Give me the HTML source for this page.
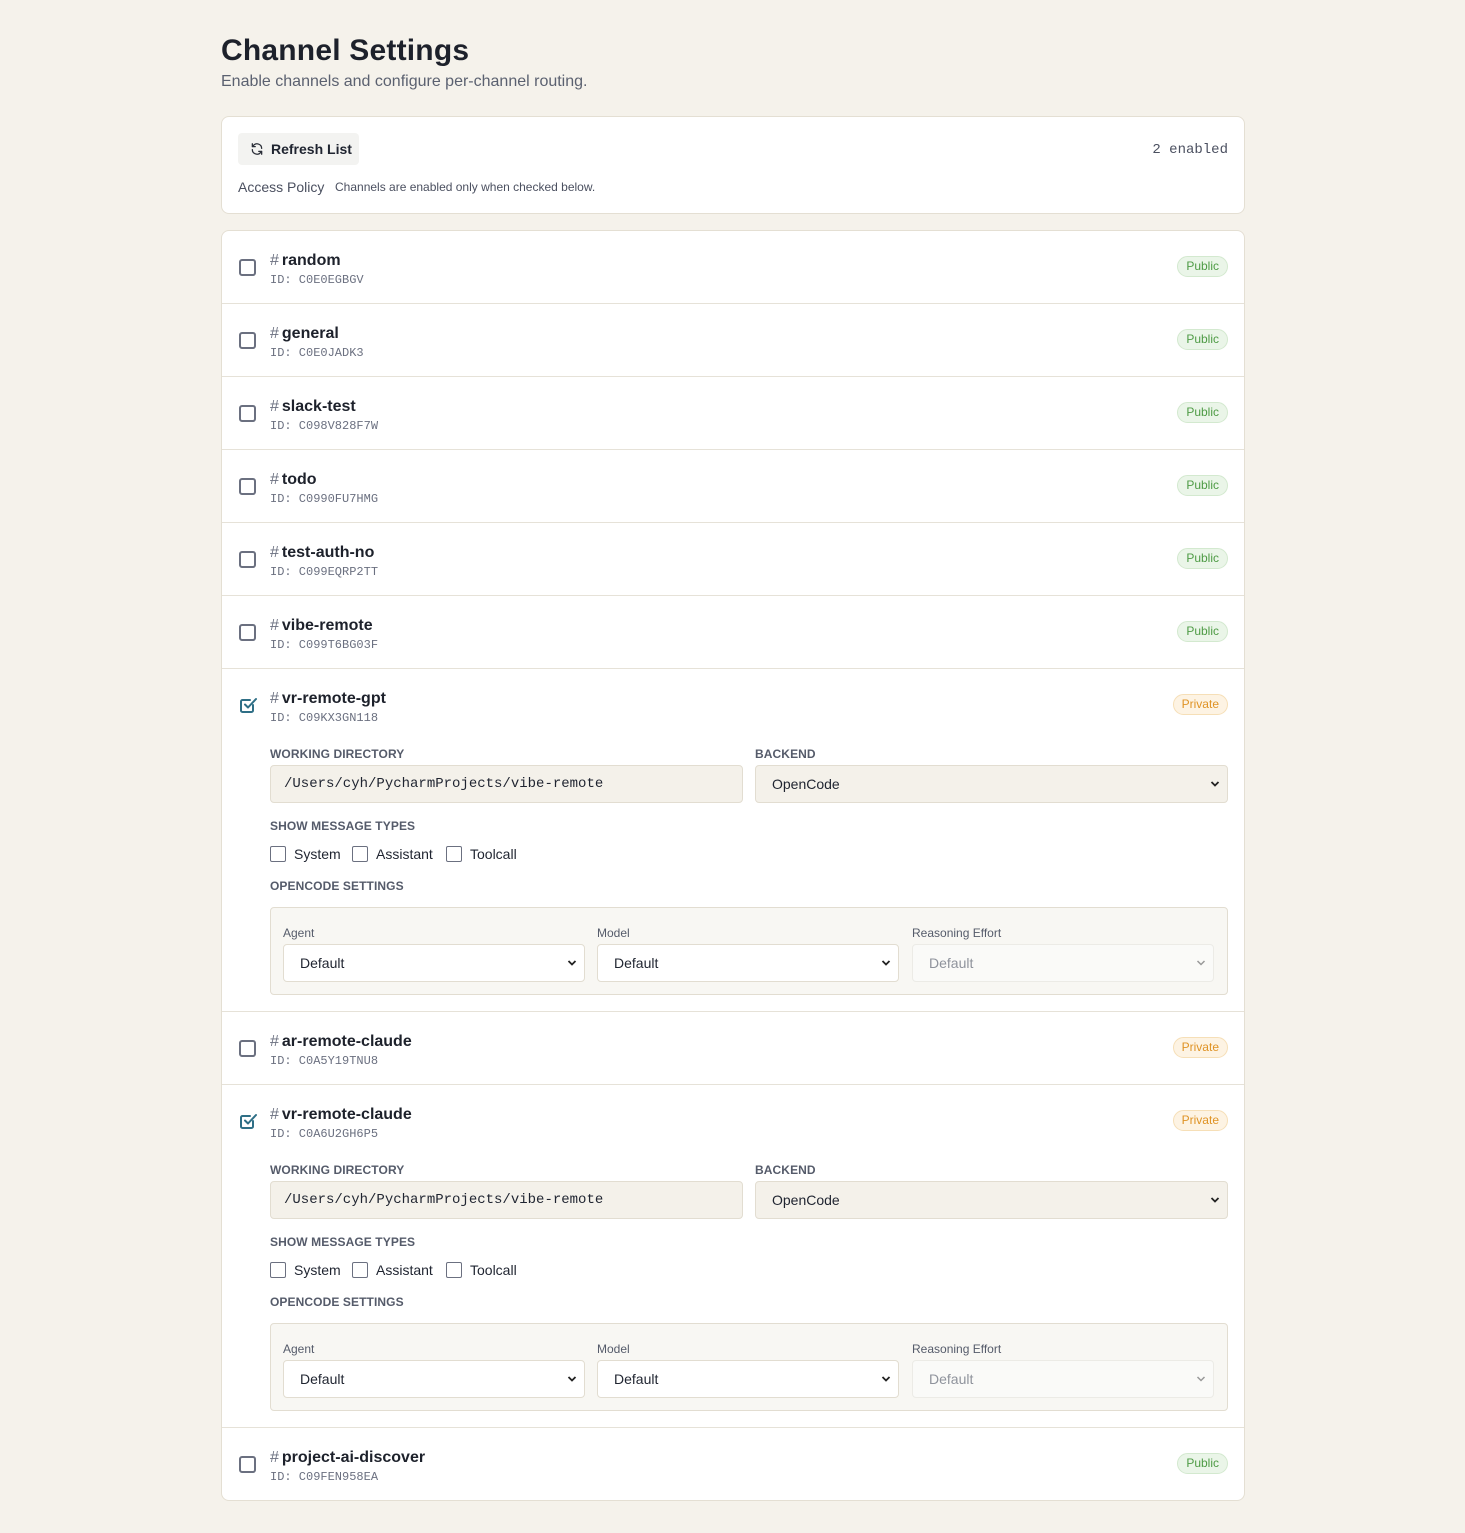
<!DOCTYPE html>
<html><head><meta charset="utf-8">
<style>
*{box-sizing:border-box;margin:0;padding:0}
body{width:1465px;height:1533px;background:#f5f2eb;font-family:"Liberation Sans",sans-serif;color:#1f2430;position:relative;overflow:hidden}
.abs{position:absolute}
.mono{font-family:"Liberation Mono",monospace}
h1{position:absolute;left:221px;top:34px;font-size:30px;font-weight:700;letter-spacing:0.2px;color:#1d212b}
.sub{position:absolute;left:221px;top:73px;font-size:16px;color:#5b6170}
.card{position:absolute;left:221px;width:1024px;background:#fff;border:1px solid #e4dfd3;border-radius:8px}
.btn{position:absolute;left:16px;top:16px;width:121px;height:32px;background:#f3f3f1;border-radius:4px;font-size:14px;font-weight:700;line-height:32px;padding-left:33px;color:#1f2430}
.row{position:relative;height:73px;border-bottom:1px solid #e6e2d8}
.row:last-child{border-bottom:none}
.cb{position:absolute;left:17px;top:28px;width:17px;height:17px;border:2px solid #6b7080;border-radius:3px}
.name{position:absolute;left:48px;top:21px;font-size:16px;font-weight:700;color:#1d212b}
.name span{font-weight:400;color:#6b7080;margin-right:3px}
.id{position:absolute;left:48px;top:42px;font-size:12px;color:#6b7080}
.badge{position:absolute;right:16px;top:25px;height:21px;line-height:19px;font-size:12px;padding:0 8px;border-radius:11px}
.pub{background:#eaf5e8;color:#4e9b45;border:1px solid #d3e9cf}
.pri{background:#fdf3e3;color:#df9325;border:1px solid #f6dfb7}
.lbl{position:absolute;left:48px;font-size:12px;font-weight:700;color:#555b6a;letter-spacing:0.1px}
.inp{position:absolute;top:96px;height:38px;width:473px;background:#f4f1ea;border:1px solid #e2ddd1;border-radius:4px;font-size:14px;line-height:36px;padding-left:13px;color:#1f2430}
.chk{position:absolute;top:177px;font-size:14px;color:#1f2430;line-height:16px}
.chk i{display:inline-block;width:16px;height:16px;border:1px solid #6b7080;border-radius:2px;vertical-align:-3px;margin-right:8px}
.box{position:absolute;left:48px;top:238px;width:958px;height:88px;background:#f8f7f3;border:1px solid #e2ddd1;border-radius:4px}
.box .l{position:absolute;top:18px;font-size:12px;color:#555b6a}
.sel{position:absolute;top:36px;width:302px;height:38px;background:#fff;border:1px solid #e2ddd1;border-radius:4px;font-size:14px;line-height:36px;padding-left:16px}
.sel.dis{background:#fafaf8;color:#8f939c;border-color:#ecebe6}
.arr{position:absolute;right:7px;top:14px}
</style></head><body>
<h1>Channel Settings</h1>
<div class="sub">Enable channels and configure per-channel routing.</div>

<div class="card" style="top:116px;height:98px">
  <div class="btn"><svg class="abs" style="left:12px;top:9px" width="14" height="14" viewBox="0 0 24 24" fill="none" stroke="#2a2e38" stroke-width="2.2" stroke-linecap="round" stroke-linejoin="round"><path d="M20 11a8 8 0 0 0-14.5-4.5L4 8M4 3v5h5"/><path d="M4 13a8 8 0 0 0 14.5 4.5L20 16M20 21v-5h-5"/></svg>Refresh List</div>
  <div class="abs mono" style="right:16px;top:25px;font-size:14px;color:#4b5060">2 enabled</div>
  <div class="abs" style="left:16px;top:62px;font-size:14px;color:#4b5060">Access Policy</div>
  <div class="abs" style="left:113px;top:63px;font-size:12px;color:#4b5060">Channels are enabled only when checked below.</div>
</div>

<div class="card" style="top:230px;height:1271px;overflow:hidden">
  <div class="row"><div class="cb"></div><div class="name"><span>#</span>random</div><div class="id mono">ID: C0E0EGBGV</div><div class="badge pub">Public</div></div>
  <div class="row"><div class="cb"></div><div class="name"><span>#</span>general</div><div class="id mono">ID: C0E0JADK3</div><div class="badge pub">Public</div></div>
  <div class="row"><div class="cb"></div><div class="name"><span>#</span>slack-test</div><div class="id mono">ID: C098V828F7W</div><div class="badge pub">Public</div></div>
  <div class="row"><div class="cb"></div><div class="name"><span>#</span>todo</div><div class="id mono">ID: C0990FU7HMG</div><div class="badge pub">Public</div></div>
  <div class="row"><div class="cb"></div><div class="name"><span>#</span>test-auth-no</div><div class="id mono">ID: C099EQRP2TT</div><div class="badge pub">Public</div></div>
  <div class="row"><div class="cb"></div><div class="name"><span>#</span>vibe-remote</div><div class="id mono">ID: C099T6BG03F</div><div class="badge pub">Public</div></div>

  <div class="row" style="height:343px">
    <svg class="abs" style="left:16px;top:26px" width="20" height="20" viewBox="0 0 20 20" fill="none" stroke="#2f6f86" stroke-width="2" stroke-linecap="round" stroke-linejoin="round"><path d="M15 10v5.5a1.5 1.5 0 0 1-1.5 1.5h-9A1.5 1.5 0 0 1 3 15.5v-9A1.5 1.5 0 0 1 4.5 5H12"/><path d="M7 9.5l3 3 8-8.5"/></svg>
    <div class="name"><span>#</span>vr-remote-gpt</div><div class="id mono">ID: C09KX3GN118</div><div class="badge pri">Private</div>
    <div class="lbl" style="top:78px">WORKING DIRECTORY</div>
    <div class="lbl" style="top:78px;left:533px">BACKEND</div>
    <div class="inp mono" style="left:48px">/Users/cyh/PycharmProjects/vibe-remote</div>
    <div class="inp" style="left:533px;padding-left:16px">OpenCode<svg class="arr" width="10" height="8" viewBox="0 0 10 8"><path d="M1.5 2l3.5 3.5L8.5 2" fill="none" stroke="#222" stroke-width="1.8"/></svg></div>
    <div class="lbl" style="top:150px">SHOW MESSAGE TYPES</div>
    <div class="chk" style="left:48px"><i></i>System</div>
    <div class="chk" style="left:130px"><i></i>Assistant</div>
    <div class="chk" style="left:224px"><i></i>Toolcall</div>
    <div class="lbl" style="top:210px">OPENCODE SETTINGS</div>
    <div class="box">
      <div class="l" style="left:12px">Agent</div><div class="l" style="left:326px">Model</div><div class="l" style="left:641px">Reasoning Effort</div>
      <div class="sel" style="left:12px">Default<svg class="arr" width="10" height="8" viewBox="0 0 10 8"><path d="M1.5 2l3.5 3.5L8.5 2" fill="none" stroke="#222" stroke-width="1.8"/></svg></div>
      <div class="sel" style="left:326px">Default<svg class="arr" width="10" height="8" viewBox="0 0 10 8"><path d="M1.5 2l3.5 3.5L8.5 2" fill="none" stroke="#222" stroke-width="1.8"/></svg></div>
      <div class="sel dis" style="left:641px">Default<svg class="arr" width="10" height="8" viewBox="0 0 10 8"><path d="M1.5 2l3.5 3.5L8.5 2" fill="none" stroke="#999" stroke-width="1.5"/></svg></div>
    </div>
  </div>

  <div class="row"><div class="cb"></div><div class="name"><span>#</span>ar-remote-claude</div><div class="id mono">ID: C0A5Y19TNU8</div><div class="badge pri">Private</div></div>

  <div class="row" style="height:343px">
    <svg class="abs" style="left:16px;top:26px" width="20" height="20" viewBox="0 0 20 20" fill="none" stroke="#2f6f86" stroke-width="2" stroke-linecap="round" stroke-linejoin="round"><path d="M15 10v5.5a1.5 1.5 0 0 1-1.5 1.5h-9A1.5 1.5 0 0 1 3 15.5v-9A1.5 1.5 0 0 1 4.5 5H12"/><path d="M7 9.5l3 3 8-8.5"/></svg>
    <div class="name"><span>#</span>vr-remote-claude</div><div class="id mono">ID: C0A6U2GH6P5</div><div class="badge pri">Private</div>
    <div class="lbl" style="top:78px">WORKING DIRECTORY</div>
    <div class="lbl" style="top:78px;left:533px">BACKEND</div>
    <div class="inp mono" style="left:48px">/Users/cyh/PycharmProjects/vibe-remote</div>
    <div class="inp" style="left:533px;padding-left:16px">OpenCode<svg class="arr" width="10" height="8" viewBox="0 0 10 8"><path d="M1.5 2l3.5 3.5L8.5 2" fill="none" stroke="#222" stroke-width="1.8"/></svg></div>
    <div class="lbl" style="top:150px">SHOW MESSAGE TYPES</div>
    <div class="chk" style="left:48px"><i></i>System</div>
    <div class="chk" style="left:130px"><i></i>Assistant</div>
    <div class="chk" style="left:224px"><i></i>Toolcall</div>
    <div class="lbl" style="top:210px">OPENCODE SETTINGS</div>
    <div class="box">
      <div class="l" style="left:12px">Agent</div><div class="l" style="left:326px">Model</div><div class="l" style="left:641px">Reasoning Effort</div>
      <div class="sel" style="left:12px">Default<svg class="arr" width="10" height="8" viewBox="0 0 10 8"><path d="M1.5 2l3.5 3.5L8.5 2" fill="none" stroke="#222" stroke-width="1.8"/></svg></div>
      <div class="sel" style="left:326px">Default<svg class="arr" width="10" height="8" viewBox="0 0 10 8"><path d="M1.5 2l3.5 3.5L8.5 2" fill="none" stroke="#222" stroke-width="1.8"/></svg></div>
      <div class="sel dis" style="left:641px">Default<svg class="arr" width="10" height="8" viewBox="0 0 10 8"><path d="M1.5 2l3.5 3.5L8.5 2" fill="none" stroke="#999" stroke-width="1.5"/></svg></div>
    </div>
  </div>

  <div class="row"><div class="cb"></div><div class="name"><span>#</span>project-ai-discover</div><div class="id mono">ID: C09FEN958EA</div><div class="badge pub">Public</div></div>
</div>
</body></html>
